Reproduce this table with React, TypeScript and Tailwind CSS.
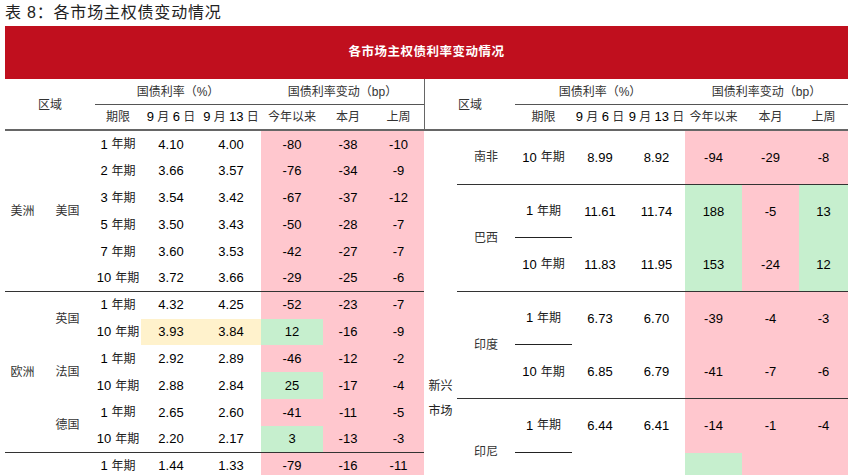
import React from "react";

const FONT = { fontFamily: '"Liberation Sans", "Noto Sans CJK SC", sans-serif' };

type Bg = "p" | "g" | "y" | "n";
const bgClass = (b: Bg) =>
  b === "p" ? "bg-[#FFC7CE]" : b === "g" ? "bg-[#C6EFCE]" : b === "y" ? "bg-[#FFF2CC]" : "";

function Term({ t }: { t: string }) {
  const m = t.match(/^(\d+)(.*)$/);
  if (!m) return <>{t}</>;
  return (
    <>
      <span className="text-[13px]">{m[1]}</span>
      <span className="text-[12px] ml-[4px] text-[#222]">{m[2]}</span>
    </>
  );
}

type Row = { term: string; a: string; b: string; c: [string, Bg]; d: [string, Bg]; e: [string, Bg]; ab?: Bg; last?: boolean };

function LeftRow({ r }: { r: Row }) {
  const bb = r.last ? "border-b-[1.5px] border-[#333]" : "";
  const cell = "flex items-center justify-center text-[13px] text-black";
  return (
    <>
      <div className={`${cell} ${bb}`}>
        <Term t={r.term} />
      </div>
      <div className={`${cell} ${bb} ${bgClass(r.ab || "n")}`}>{r.a}</div>
      <div className={`${cell} ${bb} ${bgClass(r.ab || "n")}`}>{r.b}</div>
      <div className={`${cell} ${bb} ${bgClass(r.c[1])}`}>{r.c[0]}</div>
      <div className={`${cell} ${bb} ${bgClass(r.d[1])}`}>{r.d[0]}</div>
      <div className={`${cell} ${bb} ${bgClass(r.e[1])}`}>{r.e[0]}</div>
    </>
  );
}

type RRow = Row & { sub?: boolean };

function RightRow({ r }: { r: RRow }) {
  const bb = r.last ? "border-b-[1.5px] border-[#333]" : "";
  const cell = "row-span-2 flex items-center justify-center text-[13px] text-black";
  return (
    <>
      <div className={`${cell} ${r.last ? bb : r.sub ? "border-b-[1.5px] border-[#222]" : ""}`}>
        <Term t={r.term} />
      </div>
      <div className={`${cell} ${bb}`}>{r.a}</div>
      <div className={`${cell} ${bb}`}>{r.b}</div>
      <div className={`${cell} ${bb} ${bgClass(r.c[1])}`}>{r.c[0]}</div>
      <div className={`${cell} ${bb} ${bgClass(r.d[1])}`}>{r.d[0]}</div>
      <div className={`${cell} ${bb} ${bgClass(r.e[1])}`}>{r.e[0]}</div>
    </>
  );
}

const leftRows: Row[] = [
  { term: "1年期", a: "4.10", b: "4.00", c: ["-80", "p"], d: ["-38", "p"], e: ["-10", "p"] },
  { term: "2年期", a: "3.66", b: "3.57", c: ["-76", "p"], d: ["-34", "p"], e: ["-9", "p"] },
  { term: "3年期", a: "3.54", b: "3.42", c: ["-67", "p"], d: ["-37", "p"], e: ["-12", "p"] },
  { term: "5年期", a: "3.50", b: "3.43", c: ["-50", "p"], d: ["-28", "p"], e: ["-7", "p"] },
  { term: "7年期", a: "3.60", b: "3.53", c: ["-42", "p"], d: ["-27", "p"], e: ["-7", "p"] },
  { term: "10年期", a: "3.72", b: "3.66", c: ["-29", "p"], d: ["-25", "p"], e: ["-6", "p"], last: true },
  { term: "1年期", a: "4.32", b: "4.25", c: ["-52", "p"], d: ["-23", "p"], e: ["-7", "p"] },
  { term: "10年期", a: "3.93", b: "3.84", ab: "y", c: ["12", "g"], d: ["-16", "p"], e: ["-9", "p"] },
  { term: "1年期", a: "2.92", b: "2.89", c: ["-46", "p"], d: ["-12", "p"], e: ["-2", "p"] },
  { term: "10年期", a: "2.88", b: "2.84", c: ["25", "g"], d: ["-17", "p"], e: ["-4", "p"] },
  { term: "1年期", a: "2.65", b: "2.60", c: ["-41", "p"], d: ["-11", "p"], e: ["-5", "p"] },
  { term: "10年期", a: "2.20", b: "2.17", c: ["3", "g"], d: ["-13", "p"], e: ["-3", "p"], last: true },
  { term: "1年期", a: "1.44", b: "1.33", c: ["-79", "p"], d: ["-16", "p"], e: ["-11", "p"] },
  { term: "", a: "", b: "", c: ["", "p"], d: ["", "p"], e: ["", "p"], last: true },
];

const rightRows: RRow[] = [
  { term: "10年期", a: "8.99", b: "8.92", c: ["-94", "p"], d: ["-29", "p"], e: ["-8", "p"], last: true },
  { term: "1年期", a: "11.61", b: "11.74", c: ["188", "g"], d: ["-5", "p"], e: ["13", "g"], sub: true },
  { term: "10年期", a: "11.83", b: "11.95", c: ["153", "g"], d: ["-24", "p"], e: ["12", "g"], last: true },
  { term: "1年期", a: "6.73", b: "6.70", c: ["-39", "p"], d: ["-4", "p"], e: ["-3", "p"], sub: true },
  { term: "10年期", a: "6.85", b: "6.79", c: ["-41", "p"], d: ["-7", "p"], e: ["-6", "p"], last: true },
  { term: "1年期", a: "6.44", b: "6.41", c: ["-14", "p"], d: ["-1", "p"], e: ["-4", "p"], sub: true },
  { term: "", a: "", b: "", c: ["", "g"], d: ["", "p"], e: ["", "p"], last: true },
];

const hdr = "flex items-center justify-center text-[12px] text-[#333]";

export default function App() {
  return (
    <div className="w-[855px] h-[475px] overflow-hidden bg-white" style={FONT}>
      <div className="h-[26px] pl-[5px] flex items-center text-[16px] text-[#222] tracking-[0.8px]">
        表 8：各市场主权债变动情况
      </div>
      <div className="ml-[5px] w-[843px] h-[53px] bg-[#C00F1E] flex items-center justify-center text-white font-bold text-[12.5px] tracking-[0.5px]">
        各市场主权债利率变动情况
      </div>
      <div className="flex ml-[5px]">
        {/* Left table */}
        <div className="w-[419px] grid grid-cols-[35px_55px_46px_60px_60px_62px_50px_51px] grid-rows-[26px_26px_repeat(14,26.8px)]">
          <div className={`${hdr} col-start-1 row-start-1 col-span-2 row-span-2 border-b-2 border-[#666] pt-[2px]`}>区域</div>
          <div className={`${hdr} col-start-3 row-start-1 col-span-3 border-b-[1.5px] border-[#555]`}>国债利率（%）</div>
          <div className={`${hdr} col-start-6 row-start-1 col-span-3 border-b-[1.5px] border-[#555]`}>国债利率变动（bp）</div>
          <div className={`${hdr} col-start-3 row-start-2 border-b-2 border-[#666]`}>期限</div>
          <div className={`${hdr} col-start-4 row-start-2 border-b-2 border-[#666] whitespace-nowrap`}>
            <span className="text-[13px] text-black">9</span>&nbsp;月&nbsp;<span className="text-[13px] text-black">6</span>&nbsp;日
          </div>
          <div className={`${hdr} col-start-5 row-start-2 border-b-2 border-[#666] whitespace-nowrap`}>
            <span className="text-[13px] text-black">9</span>&nbsp;月&nbsp;<span className="text-[13px] text-black">13</span>&nbsp;日
          </div>
          <div className={`${hdr} col-start-6 row-start-2 border-b-2 border-[#666]`}>今年以来</div>
          <div className={`${hdr} col-start-7 row-start-2 border-b-2 border-[#666]`}>本月</div>
          <div className={`${hdr} col-start-8 row-start-2 border-b-2 border-[#666]`}>上周</div>

          <div className={`${hdr} col-start-1 row-start-3 row-span-6 border-b-[1.5px] border-[#333]`}>美洲</div>
          <div className={`${hdr} col-start-2 row-start-3 row-span-6 border-b-[1.5px] border-[#333]`}>美国</div>
          <div className={`${hdr} col-start-1 row-start-9 row-span-6 border-b-[1.5px] border-[#333]`}>欧洲</div>
          <div className={`${hdr} col-start-2 row-start-9 row-span-2`}>英国</div>
          <div className={`${hdr} col-start-2 row-start-11 row-span-2`}>法国</div>
          <div className={`${hdr} col-start-2 row-start-13 row-span-2 border-b-[1.5px] border-[#333]`}>德国</div>
          <div className={`${hdr} col-start-1 row-start-15 row-span-2 border-b-[1.5px] border-[#333]`}></div>
          <div className={`${hdr} col-start-2 row-start-15 row-span-2 border-b-[1.5px] border-[#333]`}></div>
          {leftRows.map((r, i) => (
            <LeftRow key={i} r={r} />
          ))}
        </div>

        {/* Right table */}
        <div className="w-[424px] grid grid-cols-[33px_58px_57px_56px_57px_57px_57px_49px] grid-rows-[26px_26px_repeat(20,26.8px)]">
          <div className={`${hdr} col-start-1 row-start-1 col-span-2 row-span-2 border-b-2 border-l-[1.5px] border-[#666] pt-[2px]`}>区域</div>
          <div className={`${hdr} col-start-3 row-start-1 col-span-3 border-b-[1.5px] border-[#555]`}>国债利率（%）</div>
          <div className={`${hdr} col-start-6 row-start-1 col-span-3 border-b-[1.5px] border-[#555]`}>国债利率变动（bp）</div>
          <div className={`${hdr} col-start-3 row-start-2 border-b-2 border-[#666]`}>期限</div>
          <div className={`${hdr} col-start-4 row-start-2 border-b-2 border-[#666] whitespace-nowrap`}>
            <span className="text-[13px] text-black">9</span>&nbsp;月&nbsp;<span className="text-[13px] text-black">6</span>&nbsp;日
          </div>
          <div className={`${hdr} col-start-5 row-start-2 border-b-2 border-[#666] whitespace-nowrap`}>
            <span className="text-[13px] text-black">9</span>&nbsp;月&nbsp;<span className="text-[13px] text-black">13</span>&nbsp;日
          </div>
          <div className={`${hdr} col-start-6 row-start-2 border-b-2 border-[#666]`}>今年以来</div>
          <div className={`${hdr} col-start-7 row-start-2 border-b-2 border-[#666]`}>本月</div>
          <div className={`${hdr} col-start-8 row-start-2 border-b-2 border-[#666]`}>上周</div>

          <div className="col-start-1 row-start-3 row-span-20 flex flex-col items-center justify-center text-[12px] text-[#222] leading-[25px]">
            <span>新兴</span>
            <span>市场</span>
          </div>
          <div className={`${hdr} col-start-2 row-start-3 row-span-2 border-b-[1.5px] border-[#333]`}>南非</div>
          <div className={`${hdr} col-start-2 row-start-5 row-span-4 border-b-[1.5px] border-[#333]`}>巴西</div>
          <div className={`${hdr} col-start-2 row-start-9 row-span-4 border-b-[1.5px] border-[#333]`}>印度</div>
          <div className={`${hdr} col-start-2 row-start-13 row-span-4 border-b-[1.5px] border-[#333]`}>印尼</div>
          {rightRows.map((r, i) => (
            <RightRow key={i} r={r} />
          ))}
        </div>
      </div>
    </div>
  );
}
